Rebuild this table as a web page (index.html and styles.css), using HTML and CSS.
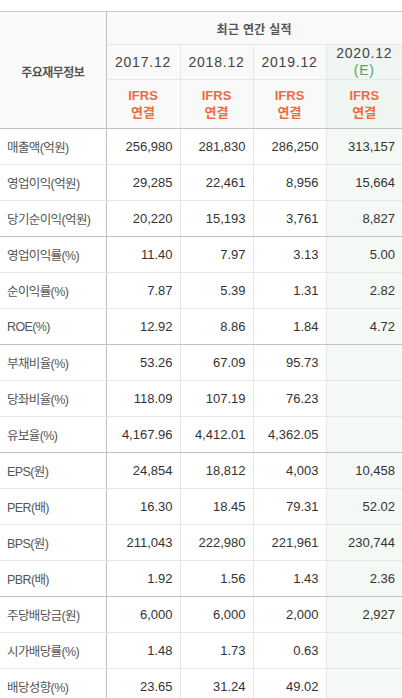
FILE: index.html
```html
<!DOCTYPE html>
<html lang="ko">
<head>
<meta charset="utf-8">
<title>주요재무정보</title>
<link rel="stylesheet" href="styles.css">
</head>
<body>
<table class="fin">
  <colgroup>
    <col class="c-label">
    <col class="c-y1">
    <col class="c-y2">
    <col class="c-y3">
    <col class="c-y4">
  </colgroup>
  <thead>
    <tr class="h1">
      <th class="corner" rowspan="3">주요재무정보</th>
      <th class="period" colspan="4">최근 연간 실적</th>
    </tr>
    <tr class="h2">
      <th class="year">2017.12</th>
      <th class="year">2018.12</th>
      <th class="year">2019.12</th>
      <th class="year est">2020.12<br><span class="e">(E)</span></th>
    </tr>
    <tr class="h3">
      <th class="ifrs">IFRS<br>연결</th>
      <th class="ifrs">IFRS<br>연결</th>
      <th class="ifrs">IFRS<br>연결</th>
      <th class="ifrs est">IFRS<br>연결</th>
    </tr>
  </thead>
  <tbody>
    <tr><th>매출액(억원)</th><td>256,980</td><td>281,830</td><td>286,250</td><td class="est">313,157</td></tr>
    <tr><th>영업이익(억원)</th><td>29,285</td><td>22,461</td><td>8,956</td><td class="est">15,664</td></tr>
    <tr class="last"><th>당기순이익(억원)</th><td>20,220</td><td>15,193</td><td>3,761</td><td class="est">8,827</td></tr>
    <tr><th>영업이익률(%)</th><td>11.40</td><td>7.97</td><td>3.13</td><td class="est">5.00</td></tr>
    <tr><th>순이익률(%)</th><td>7.87</td><td>5.39</td><td>1.31</td><td class="est">2.82</td></tr>
    <tr class="last"><th>ROE(%)</th><td>12.92</td><td>8.86</td><td>1.84</td><td class="est">4.72</td></tr>
    <tr><th>부채비율(%)</th><td>53.26</td><td>67.09</td><td>95.73</td><td class="est"></td></tr>
    <tr><th>당좌비율(%)</th><td>118.09</td><td>107.19</td><td>76.23</td><td class="est"></td></tr>
    <tr class="last"><th>유보율(%)</th><td>4,167.96</td><td>4,412.01</td><td>4,362.05</td><td class="est"></td></tr>
    <tr><th>EPS(원)</th><td>24,854</td><td>18,812</td><td>4,003</td><td class="est">10,458</td></tr>
    <tr><th>PER(배)</th><td>16.30</td><td>18.45</td><td>79.31</td><td class="est">52.02</td></tr>
    <tr><th>BPS(원)</th><td>211,043</td><td>222,980</td><td>221,961</td><td class="est">230,744</td></tr>
    <tr class="last"><th>PBR(배)</th><td>1.92</td><td>1.56</td><td>1.43</td><td class="est">2.36</td></tr>
    <tr><th>주당배당금(원)</th><td>6,000</td><td>6,000</td><td>2,000</td><td class="est">2,927</td></tr>
    <tr><th>시가배당률(%)</th><td>1.48</td><td>1.73</td><td>0.63</td><td class="est"></td></tr>
    <tr><th>배당성향(%)</th><td>23.65</td><td>31.24</td><td>49.02</td><td class="est"></td></tr>
  </tbody>
</table>
</body>
</html>
```
FILE: styles.css
```css
html, body {
  margin: 0;
  padding: 0;
  background: #ffffff;
}
body {
  padding-top: 11px;
  font-family: "Liberation Sans", "Noto Sans CJK KR", sans-serif;
}
.fin {
  width: 402px;
  table-layout: fixed;
  border-collapse: collapse;
  border-top: 1px solid #c9c9c9;
}
.c-label { width: 106px; }
.c-y1 { width: 74px; }
.c-y2 { width: 73px; }
.c-y3 { width: 73px; }
.c-y4 { width: 76px; }

.fin thead th {
  background: #f9f9f9;
  font-weight: normal;
  text-align: center;
  padding: 0;
  border-left: 1px solid #e6e6e6;
  border-bottom: 1px solid #e6e6e6;
}
.fin thead th.corner {
  border-left: none;
  border-right: 1px solid #c2c2c2;
  border-bottom: 1px solid #c2c2c2;
  font-family: "Noto Sans CJK KR", sans-serif;
  font-size: 12px;
  font-weight: bold;
  color: #555;
  letter-spacing: -0.5px;
  padding-top: 2px;
}
.fin .h1 th.period {
  height: 32px;
  font-family: "Noto Sans CJK KR", sans-serif;
  font-size: 12px;
  font-weight: bold;
  color: #555;
  letter-spacing: 0.3px;
  border-left: none;
}
.fin .h2 th {
  height: 34px;
  font-family: "Liberation Sans", sans-serif;
  font-weight: normal;
  font-size: 14px;
  color: #444;
  line-height: 17px;
  letter-spacing: 0.8px;
}
.fin .e { color: #5e9e70; }
.fin .h3 th {
  height: 48px;
  font-size: 13px;
  font-weight: bold;
  color: #ee6c3c;
  line-height: 17px;
  border-bottom: 1px solid #c2c2c2;
  font-family: "Liberation Sans", "Noto Sans CJK KR", sans-serif;
}
.fin thead th.est { background: #eff5f0; }

.fin tbody th,
.fin tbody td {
  height: 35px;
  padding: 0 7px;
  border-bottom: 1px solid #e6e6e6;
  font-size: 13px;
  font-weight: normal;
}
.fin tbody th {
  text-align: left;
  color: #555;
  border-right: 1px solid #c2c2c2;
  font-size: 12.5px;
  letter-spacing: -0.6px;
}
.fin tbody td {
  text-align: right;
  color: #333;
  border-left: 1px solid #e6e6e6;
}
.fin tbody td.est { background: #f4f9f5; }
.fin tbody tr.last th,
.fin tbody tr.last td {
  border-bottom: 1px solid #c2c2c2;
}
```
